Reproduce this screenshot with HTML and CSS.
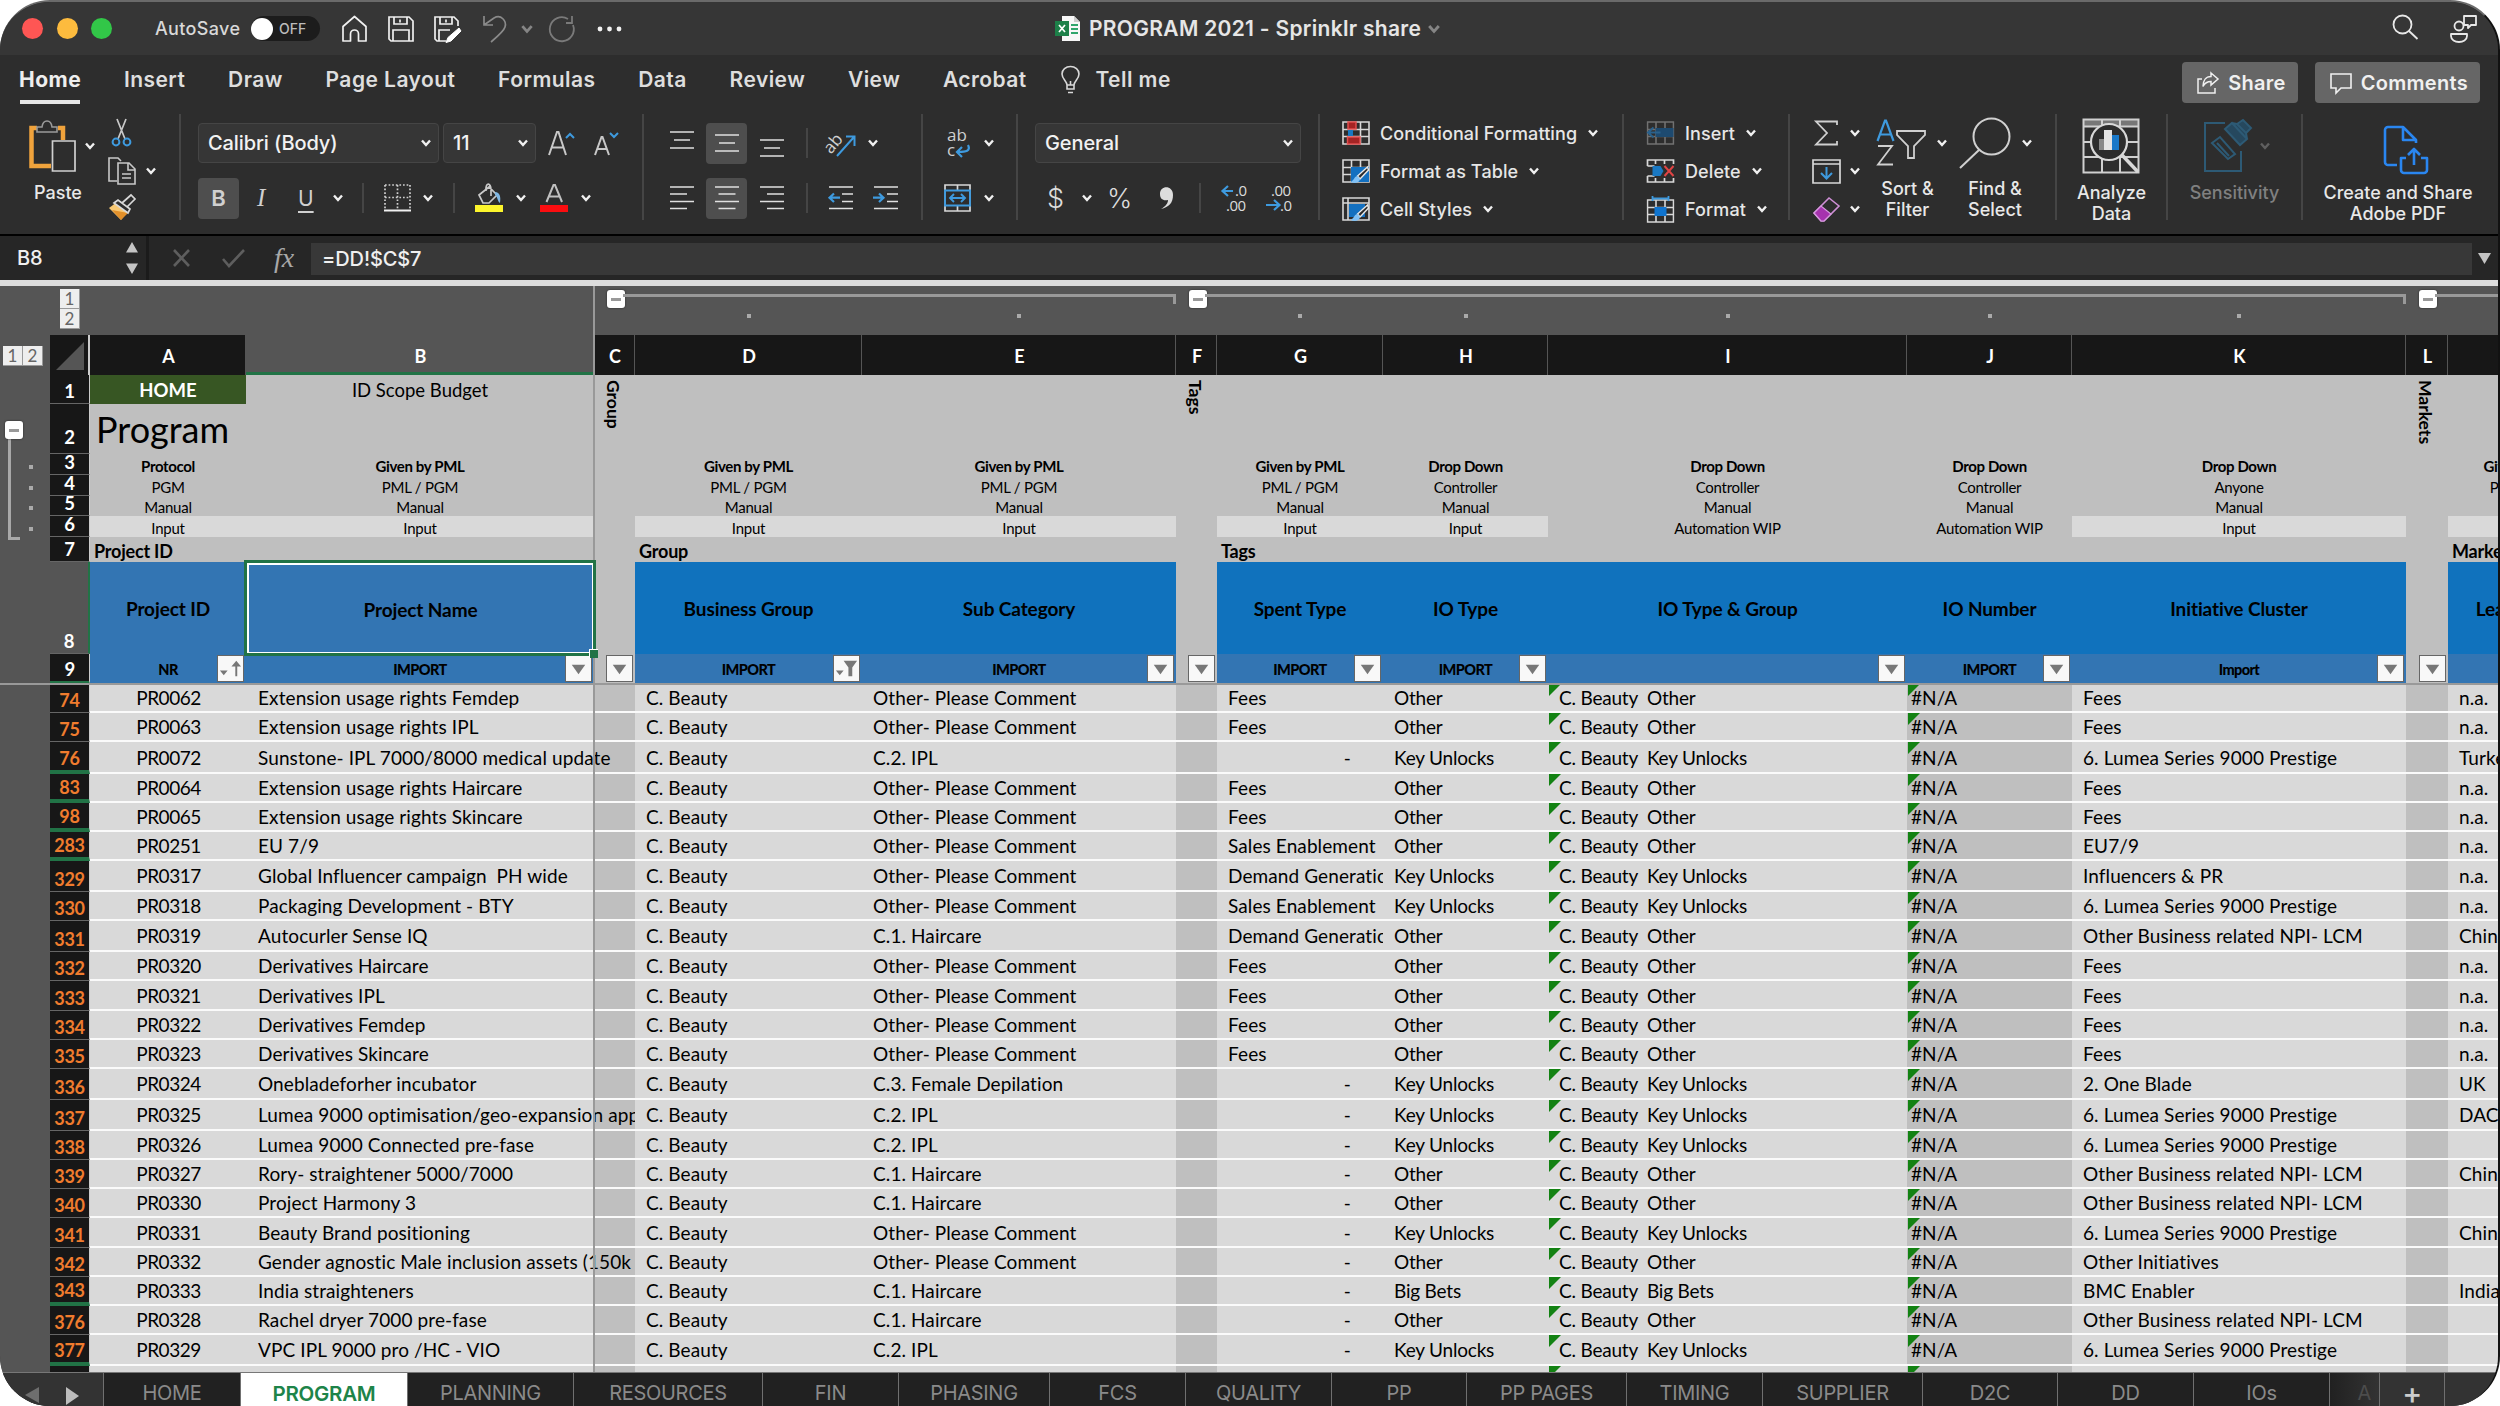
FILE: index.html
```
<!DOCTYPE html>
<html lang="en">

<head>
    <meta charset="UTF-8">
    <title>PROGRAM 2021 - Sprinklr share</title>
    <link rel="stylesheet" href="styles.css">
</head>

<body>
    <!-- shared icons -->
    <svg class="defs">
        <symbol id="chev" viewBox="0 0 12 10"><path d="M2 2.5l4 4.5 4-4.5" fill="none" stroke="currentColor" stroke-width="2.4" /></symbol>
        <symbol id="lines" viewBox="0 0 24 18"><path d="M0 1h24M4 9h16M0 17h24" stroke="#e0e0e0" stroke-width="1.7" /></symbol>
        <symbol id="grid3" viewBox="0 0 28 24"><path d="M1 1h26v22H1zM1 8.5h26M1 15.5h26M9.5 1v22M18.5 1v22" fill="none" stroke="#d8d8d8" stroke-width="1.6" /></symbol>
        <symbol id="brush" viewBox="0 0 20 18"><path d="M18 1L8 10l2.500 3L19 4z" fill="#2d2d2d" stroke="#e8e8e8" stroke-width="1.400" /><path d="M8 10c-3 0-3 4-7 6 4 2 9 1 9.500-3z" fill="#7fc0f5" /></symbol>
    </svg>

    <div class="window">
        <div class="titlebar">
            <div class="title-left">
                <span class="light red"></span>
                <span class="light yellow"></span>
                <span class="light green"></span>
                <span class="autosave">AutoSave</span>
                <span class="toggle"><i></i><b>OFF</b></span>
                <svg width="27" height="28" viewBox="0 0 27 28" fill="none" stroke="#f0f0f0" stroke-width="1.7"><path d="M2 11.500L13.500 1.500 25 11.500V26h-7.500v-7a4 4 0 0 0-8 0v7H2z" stroke-linejoin="round" /></svg>
                <svg width="26" height="28" viewBox="0 0 26 28" fill="none" stroke="#f0f0f0" stroke-width="1.7"><path d="M1 2h20l4 4v20H3l-2-2zM6 2v7h13V2M12 4.500v3M5 26V15h16v11" /></svg>
                <svg width="28" height="30" viewBox="0 0 28 30" fill="none" stroke="#f0f0f0" stroke-width="1.7"><path d="M12 27H3l-2-2V3h19l4 4v5M6 3v7h12V3M12 5.500v3M5 27V16h11" /><path d="M25 14l2 3-10 10-5 1.500 2-5z" fill="#fff" stroke="#fff" stroke-width="1" /></svg>
                <svg width="26" height="30" viewBox="0 0 26 30" fill="none" stroke="#8a8a8a" stroke-width="1.700"><path d="M2 2v9h9M2 11L12 4c7-4 13 3 11 9-1 4-7 9-14 15" /></svg>
                <svg class="c-dim" width="14" height="12"><use href="#chev" /></svg>
                <svg width="28" height="30" viewBox="0 0 28 30" fill="none" stroke="#7a7a7a" stroke-width="1.800"><path d="M24 2v7h-6M20 5a12 12 0 1 0 5 6" /></svg>
                <svg width="25" height="6" viewBox="0 0 25 6" fill="#f2f2f2"><circle cx="3" cy="3" r="2.400" /><circle cx="12.500" cy="3" r="2.400" /><circle cx="22" cy="3" r="2.400" /></svg>
            </div>
            <div class="title-mid">
                <svg width="26" height="26" viewBox="0 0 26 26"><path d="M7 0h12l6 6v19H7z" fill="#f7f7f7" /><path d="M19 0l6 6h-6z" fill="#ccc" /><path d="M16 9h7M16 13h7M16 17h7" stroke="#2fa56b" stroke-width="2" /><rect y="5" width="14" height="15" fill="#1d8049" /><path d="M4 9l6 7M10 9l-6 7" stroke="#fff" stroke-width="1.700" /></svg>
                <span>PROGRAM 2021 - Sprinklr share</span>
                <svg class="c-dim" width="16" height="12"><use href="#chev" /></svg>
            </div>
            <div class="title-right">
                <svg width="27" height="27" viewBox="0 0 27 27" fill="none" stroke="#e8e8e8" stroke-width="1.800"><circle cx="10.500" cy="10.500" r="9" /><path d="M17 17l8.500 8" /></svg>
                <svg width="30" height="30" viewBox="0 0 30 30" fill="none" stroke="#e8e8e8" stroke-width="1.800"><circle cx="10" cy="12" r="4.500" /><path d="M2 20h16v2c0 8-16 8-16 0zM15 2h12v9h-5l-3 3v-3h-4z" stroke-linejoin="round" /></svg>
            </div>
        </div>

        <div class="menu">
            <span class="active">Home</span>
            <span>Insert</span>
            <span>Draw</span>
            <span>Page Layout</span>
            <span>Formulas</span>
            <span>Data</span>
            <span>Review</span>
            <span>View</span>
            <span>Acrobat</span>
            <span class="tell"><svg width="19" height="28" viewBox="0 0 19 28" fill="none" stroke="#d8d8d8" stroke-width="1.600"><path d="M6 19c0-4-5-6-5-11a8.500 7.500 0 0 1 17 0c0 5-5 7-5 11zM6 19v4h7v-4M7 26.500h5M9.500 19v-4" /></svg>Tell me</span>
            <div class="menu-right">
                <div class="btn"><svg width="22" height="22" viewBox="0 0 22 22" fill="none" stroke="#f0f0f0" stroke-width="1.500"><path d="M5 7H1v14h17v-5M14 1l7 6-7 6V9.500c-4 0-6 1-8 5 0-6 3-10 8-10z" /></svg>Share</div>
                <div class="btn"><svg width="22" height="22" viewBox="0 0 22 22" fill="none" stroke="#f0f0f0" stroke-width="1.600"><path d="M1 2h20v14H11l-5 5v-5H1z" /></svg>Comments</div>
            </div>
        </div>

        <div class="ribbon">
            <div class="group g-paste">
                <div class="big">
                    <div class="big-icon">
                        <svg width="48" height="54" viewBox="0 0 48 54" fill="none"><path d="M8 9H2.500v38H22M29 9h5v12" stroke="#f0a33c" stroke-width="4.500" /><path d="M8 13V8h5c1-8 9-8 10 0h5v5z" fill="#2d2d2d" stroke="#9a9a9a" stroke-width="1.600" /><path d="M23.500 22H46v30H23.500z" fill="#2d2d2d" stroke="#d0d0d0" stroke-width="1.700" /></svg>
                        <svg class="c" width="12" height="10"><use href="#chev" /></svg>
                    </div>
                    <span>Paste</span>
                </div>
                <div class="clip">
                    <svg width="28" height="29" viewBox="0 0 28 29" fill="none"><path d="M9 1l8 20M18 1l-8 20" stroke="#c8c8c8" stroke-width="1.700" /><circle cx="8" cy="24" r="3.400" stroke="#3e9ade" stroke-width="2" /><circle cx="19" cy="24" r="3.400" stroke="#3e9ade" stroke-width="2" /></svg>
                    <svg width="29" height="28" viewBox="0 0 29 28" fill="none" stroke="#c8c8c8" stroke-width="1.600"><path d="M9 24H1V1h9l3 3M10 6h11l6 6v15H10zM20 6v7h7M14 17h9M14 21h9" /></svg>
                    <svg class="c" width="12" height="10"><use href="#chev" /></svg>
                    <svg width="29" height="27" viewBox="0 0 29 27" fill="none"><path d="M1 14l8-6 12 8-8 10z" fill="#f7c873" /><path d="M4 16l16 3-7 7z" fill="#e2902b" /><path d="M6 9l4-3 12 9-2 4zM14 9l9-8 4 4-8 8" fill="#2d2d2d" stroke="#d8d8d8" stroke-width="1.700" /></svg>
                </div>
            </div>

            <div class="group g-font">
                <div class="row font1">
                    <div class="combo">Calibri (Body)<svg class="c" width="12" height="10"><use href="#chev" /></svg></div>
                    <div class="combo">11<svg class="c" width="12" height="10"><use href="#chev" /></svg></div>
                    <svg width="30" height="30" viewBox="0 0 30 30"><path d="M1 27L9 4h1.500L18 27M4 19.500h11.500" fill="none" stroke="#c8c8c8" stroke-width="2" /><path d="M18 10l4-4 4 4" fill="none" stroke="#3e9ade" stroke-width="2" /></svg>
                    <svg width="28" height="30" viewBox="0 0 28 30"><path d="M1 27L7.500 9H8.500L15 27M3.500 21h9.500" fill="none" stroke="#c8c8c8" stroke-width="2" /><path d="M16 5l4 4 4-4" fill="none" stroke="#3e9ade" stroke-width="2" /></svg>
                </div>
                <div class="row font2">
                    <span class="on b">B</span>
                    <span class="i">I</span>
                    <span class="u">U</span>
                    <svg class="c" width="12" height="10"><use href="#chev" /></svg>
                    <span class="bar"></span>
                    <svg width="27" height="28" viewBox="0 0 27 28" fill="none"><path d="M1 1h25M1 13.500h25M1 1v24M13.500 1v24M26 1v24" stroke="#d0d0d0" stroke-width="1.700" stroke-dasharray="1.700 1.900" /><path d="M0 26.500h27" stroke="#f0f0f0" stroke-width="2.200" /></svg>
                    <svg class="c" width="12" height="10"><use href="#chev" /></svg>
                    <span class="bar"></span>
                    <svg width="28" height="30" viewBox="0 0 28 30"><path d="M4 12L14 4l8 8-8 8H8zM11 8c-1-9 5-9 5-1v6" fill="none" stroke="#c8c8c8" stroke-width="1.700" /><path d="M20 9c5 0 6 5 5 11-3-2-2-6-5-8z" fill="#7fb6e2" /><path d="M0 22h28v7H0z" fill="#fcf52c" /></svg>
                    <svg class="c" width="12" height="10"><use href="#chev" /></svg>
                    <svg width="28" height="30" viewBox="0 0 28 30"><path d="M6.500 19L13.500 2h1.500L22 19M9 13.500h10" fill="none" stroke="#c0c0c0" stroke-width="2" /><path d="M0 22h28v7H0z" fill="#fb0d10" /></svg>
                    <svg class="c" width="12" height="10"><use href="#chev" /></svg>
                </div>
            </div>

            <div class="group g-align">
                <div class="row align1">
                    <svg class="up" width="24" height="18"><use href="#lines" /></svg>
                    <span class="on"><svg width="24" height="18"><use href="#lines" /></svg></span>
                    <svg class="down" width="24" height="18"><use href="#lines" /></svg>
                    <span class="bar"></span>
                    <svg width="30" height="30" viewBox="0 0 30 30"><text x="-2" y="22" transform="rotate(-50 6 18)" class="ab">ab</text><path d="M10 28L27 9M19 8.500h8.500V18" fill="none" stroke="#3e9ade" stroke-width="2" /></svg>
                    <svg class="c" width="12" height="10"><use href="#chev" /></svg>
                </div>
                <div class="row align2">
                    <svg width="24" height="24" viewBox="0 0 24 24" stroke="#e0e0e0" stroke-width="1.700"><path d="M0 1h24M0 8h17M0 15.500h24M0 22.500h17" /></svg>
                    <span class="on"><svg width="24" height="24" viewBox="0 0 24 24" stroke="#e0e0e0" stroke-width="1.700"><path d="M0 1h24M3.500 8h17M0 15.500h24M3.500 22.500h17" /></svg></span>
                    <svg width="24" height="24" viewBox="0 0 24 24" stroke="#e0e0e0" stroke-width="1.700"><path d="M0 1h24M7 8h17M0 15.500h24M7 22.500h17" /></svg>
                    <span class="bar"></span>
                    <svg width="26" height="24" viewBox="0 0 26 24" fill="none" stroke="#e0e0e0" stroke-width="1.700"><path d="M1 1h24M14 8h11M14 15.500h11M1 22.500h24" /><path d="M12 11.700H2M6 7.500L1.500 11.700 6 16" stroke="#3e9ade" stroke-width="2.200" /></svg>
                    <svg width="26" height="24" viewBox="0 0 26 24" fill="none" stroke="#e0e0e0" stroke-width="1.700"><path d="M1 1h24M14 8h11M14 15.500h11M1 22.500h24" /><path d="M0 11.700h10M6 7.500l4.500 4.200L6 16" stroke="#3e9ade" stroke-width="2.200" /></svg>
                </div>
            </div>

            <div class="group g-wrap">
                <div class="row wrap1">
                    <svg width="28" height="30" viewBox="0 0 28 30"><text x="3" y="13" class="ab">ab</text><text x="3" y="28" class="ab">c</text><path d="M24 17c3 6-2 7-10 7M18 19l-5 5 5 5" fill="none" stroke="#3e9ade" stroke-width="2.200" /></svg>
                    <svg class="c" width="12" height="10"><use href="#chev" /></svg>
                </div>
                <div class="row wrap1">
                    <svg width="27" height="28" viewBox="0 0 27 28" fill="none"><path d="M1 1h25v26H1zM13.500 1v5M13.500 22v5" stroke="#d8d8d8" stroke-width="1.700" /><path d="M1 6.500h25v15H1zM6 14h15M10 10l-4 4 4 4M17 10l4 4-4 4" stroke="#3e9ade" stroke-width="1.900" /></svg>
                    <svg class="c" width="12" height="10"><use href="#chev" /></svg>
                </div>
            </div>

            <div class="group g-number">
                <div class="row">
                    <div class="combo">General<svg class="c" width="12" height="10"><use href="#chev" /></svg></div>
                </div>
                <div class="row num2">
                    <span class="sym">$</span>
                    <svg class="c" width="12" height="10"><use href="#chev" /></svg>
                    <span class="sym">%</span>
                    <svg width="15" height="24" viewBox="0 0 15 24"><path d="M2 23c5-3 7-6 7-9-5 1-8-1-8-6 0-9 13-9 13 1 0 8-4 12-12 14z" fill="#dcdcdc" /></svg>
                    <span class="bar"></span>
                    <svg width="28" height="30" viewBox="0 0 28 30"><text x="14" y="13" class="dec">.0</text><text x="5" y="28" class="dec">.00</text><path d="M12 8H1.500M7 3L1.500 8 7 13" fill="none" stroke="#3e9ade" stroke-width="2.200" /></svg>
                    <svg width="28" height="30" viewBox="0 0 28 30"><text x="5" y="13" class="dec">.00</text><text x="14" y="28" class="dec">.0</text><path d="M0 22h12M8 17l5.500 5L8 27" fill="none" stroke="#3e9ade" stroke-width="2.200" /></svg>
                </div>
            </div>

            <div class="group g-styles list">
                <div><svg width="28" height="24" viewBox="0 0 28 24"><use href="#grid3" width="28" height="24" /><path d="M6 1h8v7H6zM5.500 16H18v7H5.500z" fill="#a52424" stroke="#e04c4c" stroke-width="1.500" /><path d="M6 9h5v6H6z" fill="#1a78c2" /></svg>Conditional Formatting<svg class="c" width="12" height="10"><use href="#chev" /></svg></div>
                <div><svg width="28" height="25" viewBox="0 0 28 25"><use href="#grid3" width="28" height="24" /><path d="M9 8h18v15H9z" fill="#1370c0" /><use href="#brush" x="7" y="7" width="21" height="18" /></svg>Format as Table<svg class="c" width="12" height="10"><use href="#chev" /></svg></div>
                <div><svg width="28" height="25" viewBox="0 0 28 25"><path d="M1 1h26v22H1zM1 6h26M6 1v22" fill="none" stroke="#d8d8d8" stroke-width="1.600" /><path d="M7 7h16v13H7z" fill="#1370c0" /><use href="#brush" x="7" y="7" width="21" height="18" /></svg>Cell Styles<svg class="c" width="12" height="10"><use href="#chev" /></svg></div>
            </div>

            <div class="group g-cells list">
                <div><svg width="29" height="24" viewBox="0 0 28 24"><g opacity=".4"><use href="#grid3" width="28" height="24" /></g><path d="M9 7h18v9H9z" fill="#1d4a70" /><path d="M14 11.500H1.500M7 6.500l-5.500 5 5.500 5" fill="none" stroke="#2a618c" stroke-width="2" /></svg>Insert<svg class="c" width="12" height="10"><use href="#chev" /></svg></div>
                <div><svg width="29" height="24" viewBox="0 0 28 24"><path d="M1 7V1h26v4M1 17v6h26v-4M1 7h7M1 17h7M9 1v4M18 1v4M9 19v4M18 19v4" fill="none" stroke="#d8d8d8" stroke-width="1.700" /><path d="M6 7h8l3 5-3 5H6z" fill="#1a78c2" /><path d="M18 7l9 10M27 7l-9 10" stroke="#e04444" stroke-width="2" /></svg>Delete<svg class="c" width="12" height="10"><use href="#chev" /></svg></div>
                <div><svg width="29" height="27" viewBox="0 0 28 27"><use href="#grid3" y="3" width="28" height="24" /><path d="M8 11h12v9H8z" fill="#0f74cf" /><path d="M6 2.500h16M6 0v5M22 0v5" stroke="#3e9ade" stroke-width="1.800" /></svg>Format<svg class="c" width="12" height="10"><use href="#chev" /></svg></div>
            </div>

            <div class="group g-edit">
                <div class="sums">
                    <svg width="29" height="26" viewBox="0 0 29 26" fill="none"><path d="M25 5V1.500H4L15 13 4 24.500h21V21" stroke="#d0d0d0" stroke-width="1.800" /></svg>
                    <svg class="c" width="12" height="10"><use href="#chev" /></svg>
                    <svg width="29" height="25" viewBox="0 0 29 25" fill="none"><path d="M1 1h27v23H1zM1 5h27" stroke="#d8d8d8" stroke-width="1.700" /><path d="M14.500 8v11M9 14l5.500 5.500L20 14" stroke="#3e9ade" stroke-width="2" /></svg>
                    <svg class="c" width="12" height="10"><use href="#chev" /></svg>
                    <svg width="29" height="27" viewBox="0 0 29 27" fill="none"><path d="M2 17L17 2l10 8-15 15H9z" stroke="#cf8fd6" stroke-width="1.600" /><path d="M2 17l7-7 10 8-7 7H9z" fill="#a632ae" stroke="#d79adf" stroke-width="1.200" /></svg>
                    <svg class="c" width="12" height="10"><use href="#chev" /></svg>
                </div>
                <div class="big sort">
                    <div class="big-icon">
                        <svg width="50" height="48" viewBox="0 0 50 48" fill="none"><path d="M1.500 22L9 1.500h1L17.500 22M4 15.500h11" stroke="#3e9ade" stroke-width="2.200" /><path d="M2 27h14L2 45.500h15" stroke="#d0d0d0" stroke-width="1.800" /><path d="M21 12h28v4L38 27v12h-6V27L21 16z" stroke="#d0d0d0" stroke-width="1.800" fill="#2d2d2d" /></svg>
                        <svg class="c" width="12" height="10"><use href="#chev" /></svg>
                    </div>
                    <span>Sort &amp;<br>Filter</span>
                </div>
                <div class="big find">
                    <div class="big-icon">
                        <svg width="52" height="52" viewBox="0 0 52 52" fill="none" stroke="#d0d0d0" stroke-width="2"><circle cx="32.500" cy="19.500" r="18" /><path d="M20 33L1 51" /></svg>
                        <svg class="c" width="12" height="10"><use href="#chev" /></svg>
                    </div>
                    <span>Find &amp;<br>Select</span>
                </div>
            </div>

            <div class="group g-analyze">
                <div class="big">
                    <div class="big-icon">
                        <svg width="58" height="56" viewBox="0 0 58 56" fill="none"><path d="M2 2h54v6H2z" fill="#777" /><path d="M1.500 1.500h55v53h-55zM1 8.500h56M1 24h9M46 24h11M1 39h56M20 39v16M38 39v16M20 1v8M38 1v8" stroke="#d0d0d0" stroke-width="2" /><circle cx="27" cy="24" r="18" fill="#2d2d2d" stroke="#d8d8d8" stroke-width="2.200" /><path d="M40 37l16 17" stroke="#d8d8d8" stroke-width="3.500" /><path d="M17 21h6v11h-6z" fill="#888" /><path d="M22 12h8v20h-8z" fill="#e4e4e4" /><path d="M30 17h7v15h-7z" fill="#1a78c8" /></svg>
                    </div>
                    <span>Analyze<br>Data</span>
                </div>
            </div>

            <div class="group g-sens">
                <div class="big off">
                    <div class="big-icon">
                        <svg width="48" height="54" viewBox="0 0 48 54" fill="none" stroke="#2d5a75" stroke-width="2"><path d="M21 4H1v48h36V32" /><path d="M8 24l8-6 15 17-7 5zM13 24l12 13" /><path d="M21 10l7-6 15 16-7 6zM28 4l5 1 6-4 8 8-5 5 1 6M33 5l9 9" fill="#26485e" /></svg>
                        <svg class="c" width="12" height="10"><use href="#chev" /></svg>
                    </div>
                    <span>Sensitivity</span>
                </div>
            </div>

            <div class="group g-pdf">
                <div class="big">
                    <div class="big-icon">
                        <svg width="46" height="50" viewBox="0 0 46 50" fill="none" stroke="#2a86f0" stroke-width="2.600" stroke-linejoin="round"><path d="M14 40H5a3 3 0 0 1-3-3V5a3 3 0 0 1 3-3h15l13 13v3M20 2v13h13" /><path d="M23 33h-5v12a3 3 0 0 0 3 3h20a3 3 0 0 0 3-3V33h-6M31 40V25M25 30l6-6 6 6" /></svg>
                    </div>
                    <span>Create and Share<br>Adobe PDF</span>
                </div>
            </div>
        </div>

        <div class="formula">
            <span class="name">B8</span>
            <svg class="step" width="12" height="34" viewBox="0 0 12 34" fill="#c4c4c4"><path d="M0 11.500L6 1l6 10.500zM0 22.500h12L6 33z" /></svg>
            <span class="split"></span>
            <svg width="76" height="20" viewBox="0 0 76 20" fill="none" stroke="#5e5e5e" stroke-width="2.600"><path d="M3 2l15 16M18 2L3 18M52 11l6 7L73 2" /></svg>
            <span class="fx">fx</span>
            <span class="input">=DD!$C$7</span>
            <svg width="13" height="11" viewBox="0 0 13 11" fill="#c4c4c4"><path d="M0 0h13L6.500 11z" /></svg>
        </div>

        <div class="sheet">
            <div class="gutter">
                <div class="lv"><i>1</i><i>2</i></div>
                <div class="bracket">
                    <span class="minus"></span>
                    <i></i><i></i><i></i><i></i>
                </div>
            </div>
            <div class="cells" id="cells"></div>
            <div class="freeze-v"></div>
            <div class="freeze-h"></div>
        </div>

        <div class="tabs" id="tabs">
            <div class="nav"><svg width="54" height="20" viewBox="0 0 54 20"><path d="M14 1v16L0 9z" fill="#6e6e6e" /><path d="M41 1v18l13-9z" fill="#bdbdbd" /></svg></div>
        </div>
    </div>
    <script src="script.js"></script>
</body>

</html>
```
FILE: styles.css
```
body {
    margin: 0;
    background: #fff;
    font-family: Inter, "Liberation Sans", sans-serif;
    color: #e6e6e6;
}

.defs {
    display: none;
}

/* window frame */
.window {
    width: 2500px;
    height: 1406px;
    box-sizing: border-box;
    display: flex;
    flex-direction: column;
    overflow: hidden;
    border-radius: 50px;
    border-right: 2px solid #111;
    border-top: 2px solid #6a6a6a;
    background: #2d2d2d;
}

svg {
    display: block;
    flex: none;
    overflow: visible;
}

.c {
    color: #f0f0f0;
}

.c-dim {
    color: #858585;
}

/* title bar */
.titlebar {
    height: 53px;
    flex: none;
    background: #363636;
    display: grid;
    grid-template-columns: 1055px 1337px 1fr;
    align-items: center;
}

.title-left {
    display: grid;
    grid-template-columns: 34.500px 34.500px 53px 107px 90px 47px 46px 48px 38px 28px 49px 26px;
    padding-left: 22px;
    align-items: center;
}

.light {
    width: 21px;
    height: 21px;
    border-radius: 50%;
}

.red { background: #fe5654; }
.yellow { background: #fdbb3e; }
.green { background: #32c748; }

.autosave {
    font-size: 18px;
    font-weight: 500;
    letter-spacing: .35px;
    padding-left: 11px;
    color: #d8d8d8;
}

.toggle {
    width: 69px;
    height: 25px;
    border-radius: 13px;
    background: #1c1c1c;
    display: flex;
    align-items: center;
    gap: 6px;
}

.toggle i {
    width: 22px;
    height: 22px;
    border-radius: 50%;
    background: #fff;
}

.toggle b {
    font-size: 14px;
    font-weight: 500;
    color: #bbb;
}

.title-mid {
    display: flex;
    align-items: center;
    gap: 8px;
    font-size: 21px;
    font-weight: 600;
    letter-spacing: .3px;
}

.title-mid .c-dim {
    margin-left: -3px;
}

.title-right {
    display: flex;
    gap: 30px;
}

/* menu tabs */
.menu {
    height: 55px;
    flex: none;
    display: flex;
    align-items: center;
    padding: 0 18px 6px 19px;
    box-sizing: border-box;
    font-size: 21px;
    font-weight: 600;
    letter-spacing: .45px;
    color: #dedede;
    white-space: nowrap;
}

.menu > span {
    margin-right: 42.700px;
    line-height: 42px;
}

.menu .active {
    font-weight: 700;
    color: #eee;
    box-shadow: 0 5px 0 -1px #e6e6e6;
    height: 41px;
    line-height: 42px;
    letter-spacing: .5px;
}

.menu .tell {
    display: flex;
    align-items: center;
    gap: 15px;
    margin-left: -8px;
}

.menu-right {
    display: flex;
    gap: 17px;
    margin-left: auto;
    margin-top: 6px;
}

.btn {
    height: 41px;
    padding: 0 12px 0 15px;
    display: flex;
    align-items: center;
    gap: 9px;
    border-radius: 4px;
    background: #666;
    font-size: 20px;
    font-weight: 600;
    letter-spacing: .3px;
    color: #f0f0f0;
}

/* ribbon */
.ribbon {
    height: 126px;
    flex: none;
    display: flex;
    padding-top: 4px;
    box-sizing: border-box;
    border-bottom: 2px solid #000;
}

.group {
    height: 106px;
    border-right: 2px solid #454545;
    box-sizing: border-box;
}

.group:last-child {
    border: 0;
}

.g-paste { width: 181px; display: flex; padding-left: 29px; }
.g-font { width: 463px; }
.g-align { width: 279px; }
.g-wrap { width: 95px; }
.g-number { width: 302px; }
.g-styles { width: 304px; }
.g-cells { width: 166px; }
.g-edit { width: 267px; display: flex; }
.g-analyze { width: 111px; }
.g-sens { width: 135px; }
.g-pdf { width: 190px; }

.big {
    display: flex;
    flex-direction: column;
    align-items: center;
    font-size: 18px;
    font-weight: 500;
    line-height: 21px;
    letter-spacing: 0;
    text-align: center;
    white-space: nowrap;
    color: #e8e8e8;
}

.big-icon {
    height: 64px;
    display: flex;
    align-items: center;
    gap: 10px;
    margin-bottom: 4px;
}

.g-paste .big { width: 66px; align-items: flex-start; }
.g-paste .big span { margin-left: 5px; }
.g-paste .big-icon { gap: 7px; }
.g-analyze .big-icon { margin-left: -1px; }
.g-sens .big-icon { margin-left: 5px; gap: 7px; }
.g-pdf svg { margin: 7px 0 0 15px; }
.sort span { margin-top: 2px; }
.find span { margin-top: 2px; }

.off {
    color: #808080;
}

.off .c {
    color: #5f5f5f;
}

.clip {
    display: grid;
    grid-template-columns: 37px 14px;
    grid-template-rows: 37px 40px 33px;
    padding-left: 13px;
    align-items: center;
}

.clip svg:last-child,
.clip svg:first-child {
    grid-column: 1 / 3;
}

.row {
    display: grid;
    align-items: center;
    height: 42px;
    padding-top: 8px;
}

.row + .row {
    padding-top: 13px;
}

.font1 { grid-template-columns: 245px 105px 46px 28px; padding-left: 17px; }
.font2 { grid-template-columns: 59px 41px 34px 30px 22px 38px 31px 22px 40px 25px 40px 12px; padding-left: 17px; }
.align1 { grid-template-columns: 36px 54px 46px 21px 40px 12px; padding-left: 26px; }
.align2 { grid-template-columns: 36px 54px 46px 22px 45px 26px; padding-left: 26px; }
.wrap1 { grid-template-columns: 39px 12px; padding-left: 21px; }
.g-number .row { padding-left: 17px; }
.num2 { grid-template-columns: 39px 21px 52px 40px 22px 45px 28px; margin-left: 12px; }
.num2 .c { margin-left: -5px; }

.combo {
    width: 241px;
    height: 40px;
    box-sizing: border-box;
    border: 1px solid #454545;
    border-radius: 4px;
    background: #363636;
    padding: 0 6px 0 9px;
    display: flex;
    align-items: center;
    justify-content: space-between;
    font-size: 20px;
    font-weight: 500;
    letter-spacing: -.1px;
    color: #f2f2f2;
}

.combo + .combo {
    width: 93px;
}

.g-number .combo {
    width: 266px;
}

.on {
    width: 41px;
    height: 41px;
    border-radius: 4px;
    background: #4e4e4e;
    display: flex;
    align-items: center;
    justify-content: center;
}

.bar {
    width: 2px;
    height: 30px;
    background: #454545;
}

.b { font-size: 22px; font-weight: 600; color: #d0d0d0; }
.i { font: italic 25px "Liberation Serif", serif; color: #d0d0d0; }
.u { font-size: 21px; text-decoration: underline; text-underline-offset: 5px; color: #d0d0d0; }
.up { margin-top: -6px; }
.down { margin-top: 10px; }
.sym { font-size: 27px; font-weight: 300; color: #dcdcdc; }
.ab { font: 17px "Open Sans", sans-serif; fill: #d0d0d0; }
.dec { font: 15px "Open Sans", sans-serif; fill: #dcdcdc; letter-spacing: -.5px; }

.list {
    display: flex;
    flex-direction: column;
    padding-left: 22px;
    font-size: 18px;
    font-weight: 500;
    letter-spacing: .1px;
    white-space: nowrap;
}

.list div {
    height: 38px;
    flex: none;
    display: flex;
    align-items: center;
    gap: 10px;
}

.sums {
    display: grid;
    grid-template-columns: 37px 25px;
    grid-template-rows: 38px 38px 38px;
    align-items: center;
    padding-left: 22px;
}

.sort { width: 76px; }
.sort span { margin-right: 9px; }
.find { width: 76px; margin-left: 8px; }
.find span { margin-right: 2px; }

/* formula bar */
.formula {
    height: 44px;
    flex: none;
    background: #262626;
    display: flex;
    align-items: center;
    font-size: 20px;
    font-weight: 500;
    letter-spacing: -.1px;
    color: #f0f0f0;
}

.name { width: 109px; padding-left: 17px; }
.split { width: 3px; height: 44px; background: #1b1b1b; margin: 0 22px 0 8px; }
.fx { font: italic 28px "Liberation Serif", serif; color: #a8a8a8; margin-left: 27px; width: 37px; }
.input { width: 2150px; height: 32px; line-height: 32px; padding-left: 11px; margin: 2px 6px 0 0; background: #383838; }

/* worksheet */
.sheet {
    position: relative;
    height: 1086px;
    flex: none;
    border-top: 6px solid #dcdcdc;
    display: flex;
    overflow: hidden;
    background: #555;
    font-family: Lato, "Liberation Sans", sans-serif;
    color: #000;
}

.gutter {
    width: 50px;
    flex: none;
}

.lv {
    display: flex;
    padding: 60px 0 0 3px;
}

.lv i,
.lvls i {
    width: 20px;
    height: 20px;
    border: 1px solid #999;
    border-width: 0 1px 1px 0;
    box-sizing: border-box;
    background: #eee;
    color: #666;
    font-style: normal;
    font-size: 17px;
    line-height: 20px;
    text-align: center;
}

.lvls i {
    display: block;
}

.bracket {
    width: 9px;
    height: 69px;
    margin: 72px 0 0 8px;
    padding-top: 30px;
    border: solid #a8a8a8;
    border-width: 0 0 3px 3px;
    position: relative;
}

.bracket .minus {
    position: absolute;
    left: -6px;
    top: -17px;
}

.bracket i {
    display: block;
    width: 4px;
    height: 4px;
    margin: -3px 0 19.500px 18px;
    background: #aaa;
}

.minus {
    width: 18px;
    height: 18px;
    border-radius: 3px;
    background: linear-gradient(#999, #999) center / 10px 3px no-repeat #fff;
    box-shadow: 0 0 2px #222;
    flex: none;
}

.r {
    display: grid;
    grid-template-columns: 40px 156px 348px 41px 227px 314px 41px 166px 165px 359px 165px 334px 42px 160px;
}

.r > div {
    box-sizing: border-box;
    display: flex;
    align-items: center;
    justify-content: center;
    min-width: 0;
    min-height: 0;
    background: #bfbfbf;
    white-space: pre;
}

/* outline strip over the columns */
.outline { height: 49px; }
.r.outline > div { background: none; align-items: flex-start; padding-top: 8px; position: relative; }
.outline .ln::before { content: ""; height: 10px; border-top: 3px solid #999; position: absolute; left: 0; right: 0; top: 8px; box-sizing: border-box; }
.outline .last::before { border-right: 3px solid #999; }
.outline .ln::after { content: ""; width: 4px; height: 4px; margin-top: 20px; background: #aaa; }
.outline .grp::before { content: ""; height: 3px; position: absolute; left: 29px; right: 0; top: 8px; background: #999; }
.outline .grp .minus { margin: -4px 0 0 2px; }
.r.outline .lvls { display: block; padding: 3px 0 0 10px; }

/* column letters */
.letters { height: 40px; }
.r.letters > div { background: #171717; color: #fff; font-size: 18px; font-weight: 700; border-right: 1px solid #555; padding: 2px 0 0 2px; }
.r.letters .sel { background: #555; border-bottom: 3px solid #217346; padding-top: 5px; }
.r.letters .corner { justify-content: flex-end; border-right: 2px solid #ccc; padding-right: 3px; }

/* row numbers */
.r > .n {
    background: #171717;
    border-bottom: 1px solid #666;
    border-right: 1px solid #ccc;
    color: #fff;
    font-size: 18.500px;
    font-weight: 700;
    align-items: flex-end;
    line-height: 23px;
}

.h1 { height: 29px; }
.h2 { height: 50px; }
.h3, .h4, .h6 { height: 21px; }
.h5 { height: 20px; }
.h7 { height: 25px; }
.h8 { height: 92px; }
.h9 { height: 30px; }
.h1 > div { font-size: 18.500px; }
.h3 > div, .h4 > div, .h5 > div, .h6 > div { font-size: 15px; letter-spacing: -.25px; padding-top: 2px; }
.h3 > div { font-weight: 700; letter-spacing: -.35px; }
.r > .n { padding: 0; }
.r.h2 > .n { padding-bottom: 4px; }

.r .home { background: #375623; color: #fff; font-weight: 700; }
.r.h1 .v { align-items: flex-start; justify-content: flex-start; padding: 5px 0 0 8px; overflow: visible; z-index: 2; }
.v span { writing-mode: vertical-rl; font-size: 17.500px; font-weight: 700; line-height: 22px; height: 80px; flex: none; }
.r.h2 .title { justify-content: flex-start; padding-left: 6px; font-size: 36px; }
.r.h7 > div { justify-content: flex-start; padding: 2px 0 0 4px; font-size: 18px; font-weight: 700; letter-spacing: -.2px; }
.r.h7 > .n { justify-content: center; padding: 0; font-size: 18.500px; }
.r .in { background: #d9d9d9; }
.r .blue { background: #1072bd; font-size: 19px; font-weight: 700; letter-spacing: -.1px; padding-top: 1px; }
.r .blue2 { background: #3375b3; }
.r.h9 > div { font-size: 14.500px; font-weight: 900; letter-spacing: -.6px; position: relative; }
.r.h9 > .n { font-size: 18.500px; font-weight: 700; border-bottom: 3px solid #217346; line-height: 24px; }
.r.h8 > .n { background: #555; border-right: 2px solid #217346; }

.active-cell {
    outline: 3px solid #217346;
    outline-offset: -1px;
    border: 3px solid #fff;
    border-width: 3px 2px 2px 3px;
    z-index: 3;
    position: relative;
}

.active-cell::after {
    content: "";
    position: absolute;
    right: -6px;
    bottom: -6px;
    width: 8px;
    height: 8px;
    background: #217346;
    border: solid #fff;
    border-width: 1px 0 0 1px;
}

.filter {
    position: absolute;
    right: 2px;
    top: 1px;
    width: 27px;
    height: 27px;
    box-sizing: border-box;
    border: 1px solid #666;
    background: #f8f8f8;
}

/* data rows */
.r.d > div {
    background: #d9d9d9;
    border-bottom: 2px solid #fafafa;
    font-size: 19px;
    letter-spacing: .1px;
    justify-content: flex-start;
    padding-left: 11px;
    overflow: hidden;
    position: relative;
    z-index: 2;
}

.r.d > .n {
    background: #171717;
    border-bottom: 1px solid #666;
    color: #f07c2e;
    font-size: 18px;
    font-weight: 700;
    justify-content: center;
    padding: 2px 0 0;
    letter-spacing: -.3px;
}

.r.d > .gap { border-bottom: 4px solid #217346; padding-top: 5px; }
.r.d > .ca { justify-content: center; padding: 0 0 0 1px; letter-spacing: -.5px; }
.r.d > .cb { padding-left: 12px; overflow: visible; z-index: 1; }
.r.d > .side { background: #bfbfbf; }
.r.d > .cc { z-index: 0; }
.r.d > .dash { justify-content: flex-end; padding-right: 32px; }
.r.d > .cj { background: #bfbfbf; padding-left: 4px; }
.r.d > .tight { letter-spacing: -.2px; }

.err::before {
    content: "";
    position: absolute;
    left: 1px;
    top: 0;
    border-top: 12px solid #138213;
    border-right: 12px solid transparent;
}

.freeze-v {
    position: absolute;
    left: 593px;
    top: 0;
    width: 2px;
    height: 100%;
    background: #999;
    z-index: 2;
}

.freeze-h {
    position: absolute;
    left: 0;
    top: 397px;
    width: 100%;
    height: 2px;
    background: #999;
    z-index: 4;
}

/* sheet tabs */
.tabs {
    display: flex;
    height: 34px;
    flex: none;
    background: #333;
    border-top: 1px solid #777;
    font-size: 20px;
    letter-spacing: -.3px;
    color: #8a8a8a;
}

.tabs div {
    box-sizing: border-box;
    border-right: 1px solid #707070;
    background: #212121;
    text-align: center;
    line-height: 41px;
    flex: none;
}

.tabs .nav {
    width: 104px;
    background: #333;
    padding: 13px 0 0 25px;
}

.tabs .cur {
    background: #fff;
    color: #1e8449;
    font-weight: 600;
    font-size: 20.500px;
}

.tabs .fade {
    background: linear-gradient(90deg, #212121, #333);
    color: #4c4c4c;
    text-align: right;
    padding-right: 8px;
}

.tabs .plus {
    background: #333;
    color: #ccc;
    font-size: 30px;
    font-weight: 500;
}
```
FILE: script.js
```
// column keys, same order as the grid template
var cols = ["A", "B", "C", "D", "E", "F", "G", "H", "I", "J", "K", "L", "M"];
var side = { C: 1, F: 1, L: 1 }; // narrow grouping columns

// header block, one entry per sheet column
var r3 = ["Protocol", "Given by PML", "", "Given by PML", "Given by PML", "", "Given by PML", "Drop Down", "Drop Down", "Drop Down", "Drop Down", "", "Given by PML"];
var r4 = ["PGM", "PML / PGM", "", "PML / PGM", "PML / PGM", "", "PML / PGM", "Controller", "Controller", "Controller", "Anyone", "", "PML / PGM"];
var r5 = ["Manual", "Manual", "", "Manual", "Manual", "", "Manual", "Manual", "Manual", "Manual", "Manual", "", ""];
var r6 = ["Input", "Input", "", "Input", "Input", "", "Input", "Input", "Automation WIP", "Automation WIP", "Input", "", ""];
var r7 = ["Project ID", "", "", "Group", "", "", "Tags", "", "", "", "", "", "Markets"];
var r8 = ["Project ID", "Project Name", "", "Business Group", "Sub Category", "", "Spent Type", "IO Type", "IO Type & Group", "IO Number", "Initiative Cluster", "", "Lead Market"];
var r9 = ["NR", "IMPORT", "", "IMPORT", "IMPORT", "", "IMPORT", "IMPORT", "", "IMPORT", "Import", "", ""];

var OC = "Other- Please Comment", L6 = "6. Lumea Series 9000 Prestige", OB = "Other Business related NPI- LCM";
var KU = "Key Unlocks", HC = "C.1. Haircare", IPL = "C.2. IPL";

// row, height, id, name, sub category, spent type, io type, cluster, market, gap after row
var data = [
    [74, 29, "PR0062", "Extension usage rights Femdep", OC, "Fees", "Other", "Fees", "n.a."],
    [75, 29, "PR0063", "Extension usage rights IPL", OC, "Fees", "Other", "Fees", "n.a."],
    [76, 32, "PR0072", "Sunstone- IPL 7000/8000 medical update", IPL, "-", KU, L6, "Turkey", 1],
    [83, 29, "PR0064", "Extension usage rights Haircare", OC, "Fees", "Other", "Fees", "n.a.", 1],
    [98, 29, "PR0065", "Extension usage rights Skincare", OC, "Fees", "Other", "Fees", "n.a.", 1],
    [283, 29, "PR0251", "EU 7/9", OC, "Sales Enablement", "Other", "EU7/9", "n.a.", 1],
    [329, 31, "PR0317", "Global Influencer campaign  PH wide", OC, "Demand Generation", KU, "Influencers & PR", "n.a."],
    [330, 29, "PR0318", "Packaging Development - BTY", OC, "Sales Enablement", KU, L6, "n.a."],
    [331, 31, "PR0319", "Autocurler Sense IQ", HC, "Demand Generation", "Other", OB, "China"],
    [332, 29, "PR0320", "Derivatives Haircare", OC, "Fees", "Other", "Fees", "n.a."],
    [333, 30, "PR0321", "Derivatives IPL", OC, "Fees", "Other", "Fees", "n.a."],
    [334, 29, "PR0322", "Derivatives Femdep", OC, "Fees", "Other", "Fees", "n.a."],
    [335, 29, "PR0323", "Derivatives Skincare", OC, "Fees", "Other", "Fees", "n.a."],
    [336, 31, "PR0324", "Onebladeforher incubator", "C.3. Female Depilation", "-", KU, "2. One Blade", "UK"],
    [337, 31, "PR0325", "Lumea 9000 optimisation/geo-expansion app", IPL, "-", KU, L6, "DACH"],
    [338, 29, "PR0326", "Lumea 9000 Connected pre-fase", IPL, "-", KU, L6, ""],
    [339, 29, "PR0327", "Rory- straightener 5000/7000", HC, "-", "Other", OB, "China"],
    [340, 29, "PR0330", "Project Harmony 3", HC, "-", "Other", OB, ""],
    [341, 30, "PR0331", "Beauty Brand positioning", OC, "-", KU, L6, "China"],
    [342, 29, "PR0332", "Gender agnostic Male inclusion assets (150k", OC, "-", "Other", "Other Initiatives", ""],
    [343, 29, "PR0333", "India straighteners", HC, "-", "Big Bets", "BMC Enabler", "India", 1],
    [376, 29, "PR0328", "Rachel dryer 7000 pre-fase", HC, "-", "Other", OB, ""],
    [377, 31, "PR0329", "VPC IPL 9000 pro /HC - VIO", IPL, "-", KU, L6, "", 1],
    ["", 29, "", "", "", "", "", "", ""]
];

var html = "";

function cell(cls, text) {
    return '<div class="' + cls + '">' + String(text).replace(/&/g, "&amp;") + "</div>";
}

function filterBtn(key) {
    if (key == "M") return "";
    var d = "M6 9h14l-7 10z";
    if (key == "A") d = "M2 15h8l-4 5zM19 5l5 6h-4v10h-2V11h-4z";
    if (key == "D") d = "M2 15h8l-4 5zM10 5h14l-5 7v9h-4v-9z";
    return '<svg class="filter" viewBox="0 0 26 26"><path d="' + d + '" fill="#777"/></svg>';
}

// outline strip
html += '<div class="r outline"><div class="lvls"><i>1</i><i>2</i></div>';
cols.forEach(function (k) {
    if (side[k]) html += '<div class="grp"><span class="minus"></span></div>';
    else if (k == "A" || k == "B") html += "<div></div>";
    else html += '<div class="ln' + (k == "E" || k == "K" ? " last" : "") + '"></div>';
});
html += "</div>";

// column letters
html += '<div class="r letters"><div class="corner"><svg width="30" height="30"><path d="M29 1v28H1z" fill="#555"/></svg></div>';
cols.forEach(function (k) {
    html += cell(k == "B" ? "sel" : "", k == "M" ? "" : k);
});
html += "</div>";

// rows 1 to 9
for (var n = 1; n <= 9; n++) {
    html += '<div class="r h' + n + '">' + cell("n", n);
    cols.forEach(function (k, i) {
        if (n == 1) {
            var v = { C: "Group", F: "Tags", L: "Markets" }[k];
            if (v) html += '<div class="v"><span>' + v + "</span></div>";
            else html += cell(k == "A" ? "home" : "", { A: "HOME", B: "ID Scope Budget" }[k] || "");
        }
        if (n == 2) html += cell(k == "A" ? "title" : "", k == "A" ? "Program" : "");
        if (n == 3) html += cell("", r3[i]);
        if (n == 4) html += cell("", r4[i]);
        if (n == 5) html += cell("", r5[i]);
        if (n == 6) html += cell(side[k] || k == "I" || k == "J" ? "" : "in", r6[i]);
        if (n == 7) html += cell("", r7[i]);
        if (n == 8) html += cell(side[k] ? "" : "blue" + (i < 2 ? " blue2" : "") + (k == "B" ? " active-cell" : ""), r8[i]);
        if (n == 9) html += '<div class="' + (side[k] ? "" : "blue2") + '">' + r9[i] + filterBtn(k) + "</div>";
    });
    html += "</div>";
}

// project rows
data.forEach(function (p) {
    var on = p[2] != "";
    html += '<div class="r d" style="height:' + p[1] + 'px">';
    html += cell(p[9] ? "n gap" : "n", p[0]) + cell("ca", p[2]) + cell("cb", p[3]) + cell("side cc", "");
    html += cell("", on ? "C. Beauty" : "") + cell("", p[4]) + cell("side", "");
    html += cell(p[5] == "-" ? "dash" : "", p[5]) + cell("tight", p[6]);
    html += cell("err tight", on ? "C. Beauty  " + p[6] : "") + cell("cj err", on ? "#N/A" : "");
    html += cell("", p[7]) + cell("side", "") + cell("", p[8]) + "</div>";
});
document.getElementById("cells").innerHTML = html;

// sheet tabs with their widths
var tabs = [["HOME", 137], ["PROGRAM", 167], ["PLANNING", 166], ["RESOURCES", 189], ["FIN", 136], ["PHASING", 151], ["FCS", 136], ["QUALITY", 146],
["PP", 135], ["PP PAGES", 160], ["TIMING", 136], ["SUPPLIER", 160], ["D2C", 135], ["DD", 136], ["IOs", 136], ["A", 50], ["+", 65]];
var t = "";
tabs.forEach(function (tab) {
    var c = { PROGRAM: "cur", A: "fade", "+": "plus" }[tab[0]] || "";
    t += '<div class="' + c + '" style="width:' + tab[1] + 'px">' + tab[0] + "</div>";
});
document.getElementById("tabs").innerHTML += t;
```
